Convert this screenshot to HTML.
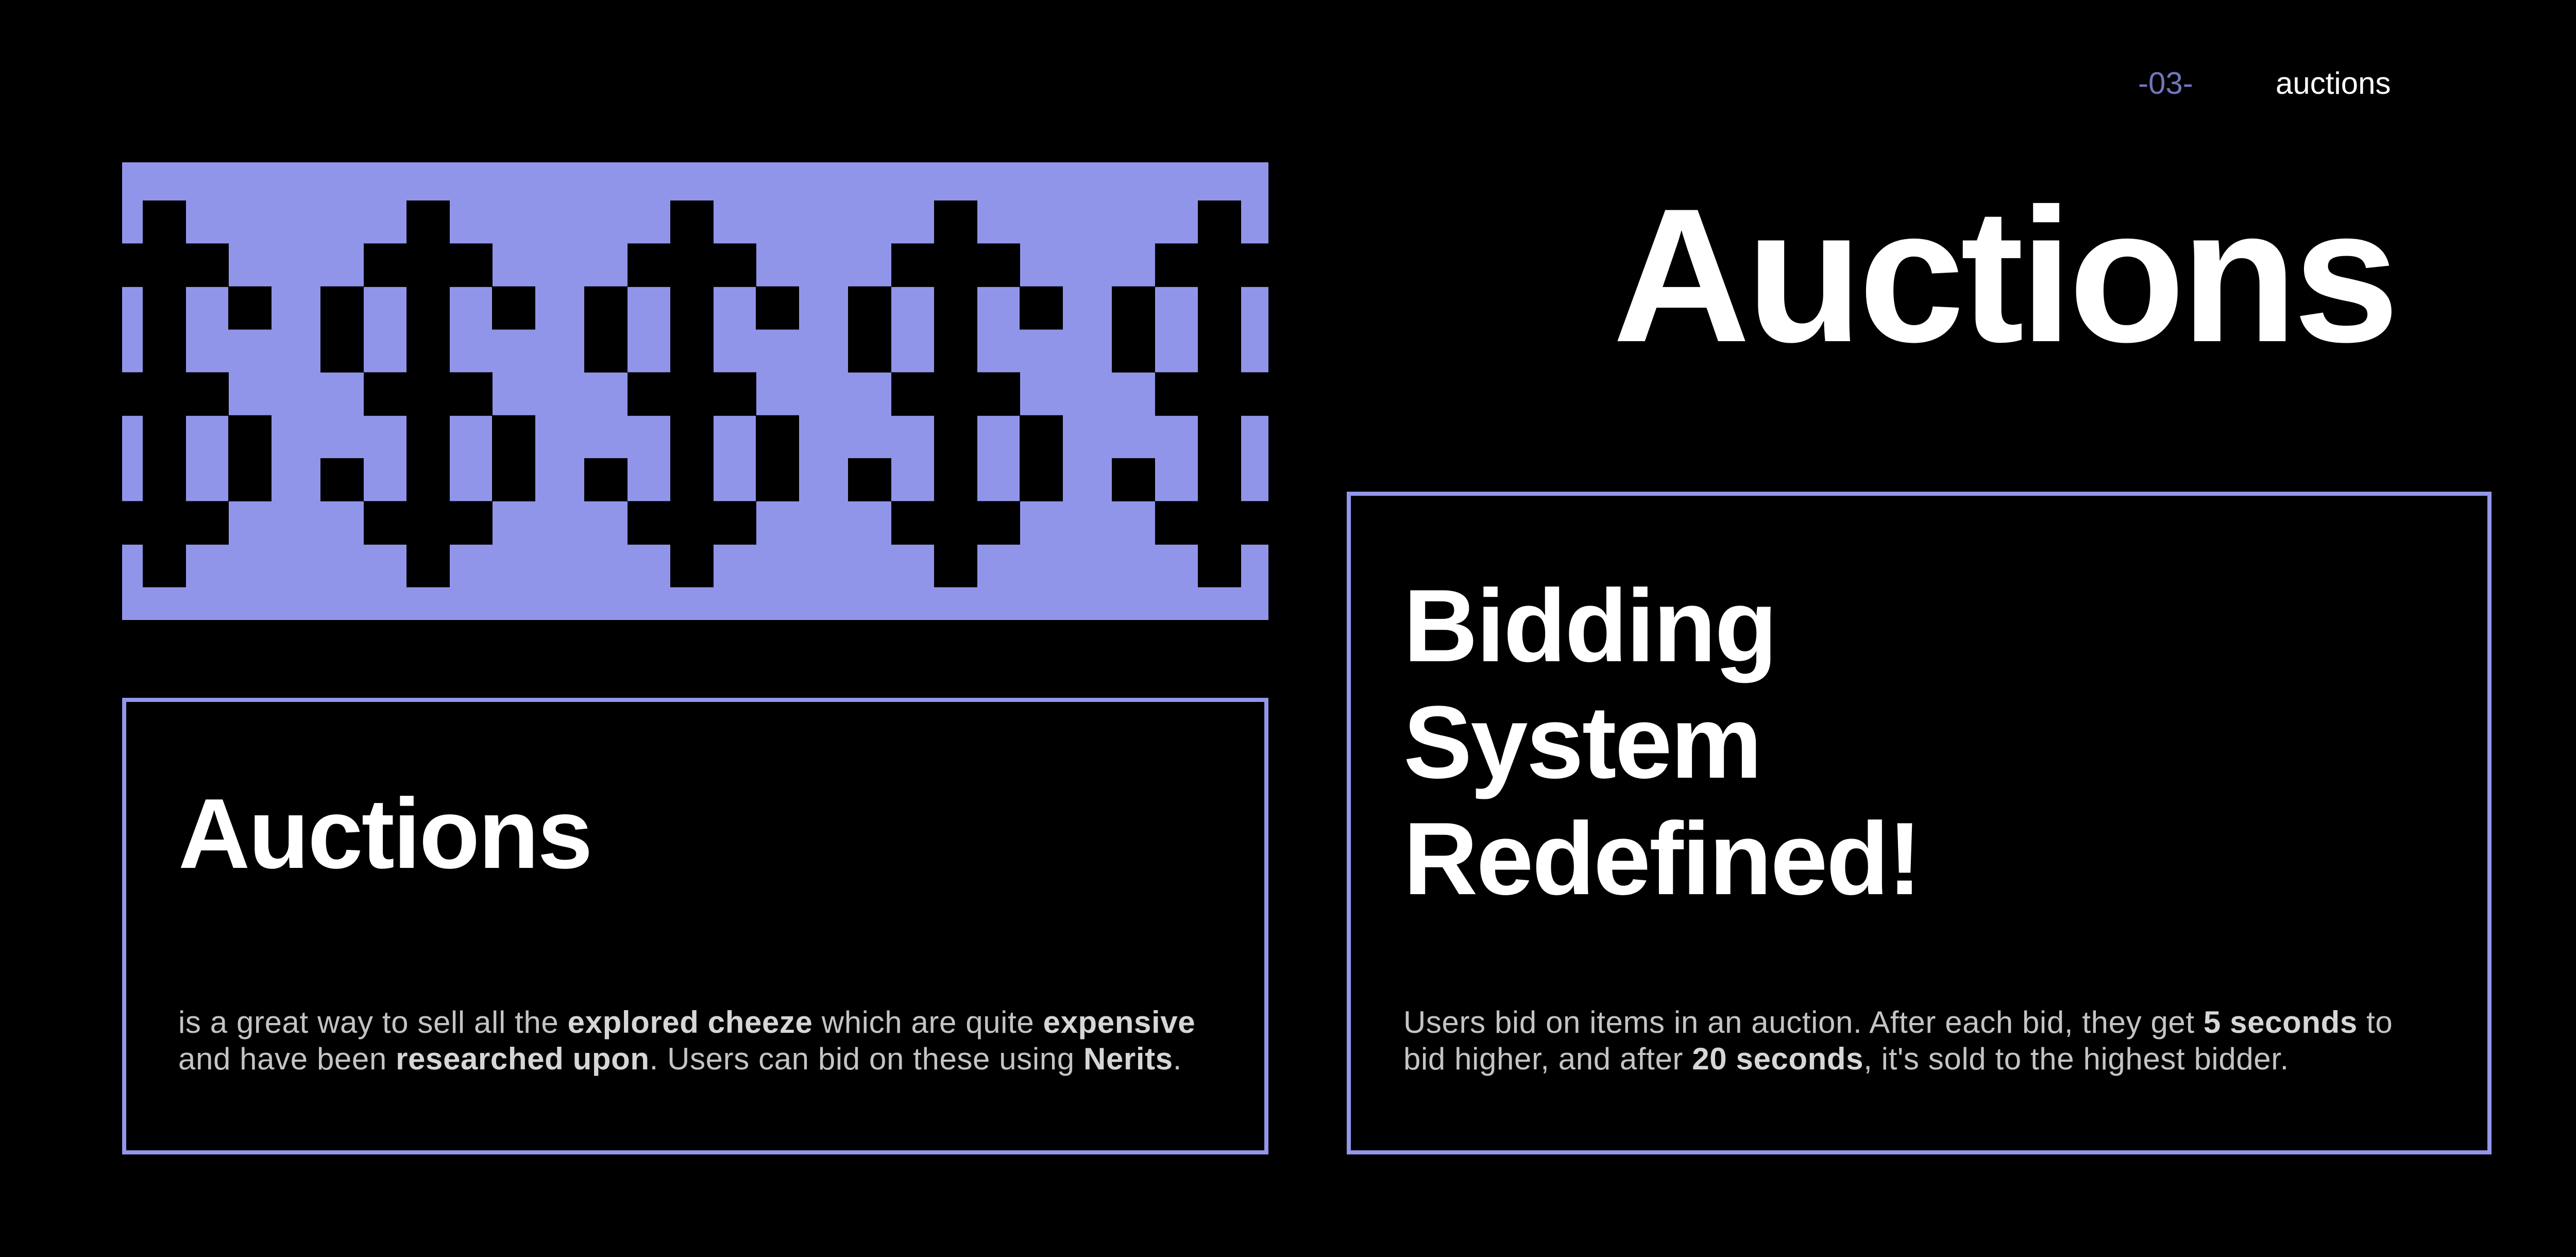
<!DOCTYPE html>
<html><head><meta charset="utf-8"><style>
html,body{margin:0;padding:0;background:#000;}
body{width:5073px;height:2439px;position:relative;overflow:hidden;font-family:"Liberation Sans",sans-serif;}
.a{position:absolute;white-space:nowrap;}
.card{position:absolute;border:8px solid #9396ea;box-sizing:border-box;}
.body{font-size:60px;line-height:71px;color:#c4c4c4;letter-spacing:0.6px;}
.body b{color:#d6d6d6;}
</style></head><body>
<div class="a" style="left:4150px;top:132px;font-size:60px;line-height:1;color:#7375bb;">-03-</div>
<div class="a" style="left:4417px;top:132px;font-size:60px;line-height:1;color:#fff;">auctions</div>
<div class="a" style="right:424px;top:350px;font-size:370px;line-height:1;color:#fff;font-weight:bold;letter-spacing:-8px;">Auctions</div>

<svg class="a" style="left:0;top:0" width="5073" height="1300" viewBox="0 0 5073 1300">
<defs><clipPath id="c"><rect x="237" y="315" width="2225" height="888"/></clipPath></defs>
<rect x="237" y="315" width="2225" height="888" fill="#9195ea"/>
<g clip-path="url(#c)" fill="#000" id="d">
</g>
</svg>
<script>
(function(){
var g=document.getElementById('d');var s='';
var R=function(r){return 389+83.33*r;};
for(var k=-1;k<6;k++){var S=277+512*k;
 var rects=[[0,0,1],[0,8,1],[-83,1,3],[-83,4,3],[-83,7,3],[0,1,8],[166,2,1],[-167,2,2],[166,5,2],[-167,6,1]];
 var w={0:84,'-83':250,'166':84,'-167':84};
 rects.forEach(function(q){var dx=q[0],r=q[1],n=q[2];var W=w[dx];var h=83.33*n;
  if(dx===0&&r===1)h=83.33*7;
  if(dx===-83) {n=1;h=84;}
  s+='<rect x="'+(S+dx)+'" y="'+R(r)+'" width="'+W+'" height="'+(h+0.5)+'"/>';});
}
g.innerHTML=s;})();
</script>

<div class="card" style="left:237px;top:1354px;width:2225px;height:886px;"></div>
<div class="a" style="left:346px;top:1521px;font-size:193px;line-height:1;color:#fff;font-weight:bold;letter-spacing:-3px;">Auctions</div>
<div class="a body" style="left:346px;top:1948px;">is a great way to sell all the <b>explored cheeze</b> which are quite <b>expensive</b><br>and have been <b>researched upon</b>. Users can bid on these using <b>Nerits</b>.</div>

<div class="card" style="left:2614px;top:954px;width:2222px;height:1286px;"></div>
<div class="a" style="left:2724px;top:1102px;font-size:200px;line-height:226px;color:#fff;font-weight:bold;letter-spacing:-3px;">Bidding<br>System<br>Redefined!</div>
<div class="a body" style="left:2724px;top:1948px;">Users bid on items in an auction. After each bid, they get <b>5 seconds</b> to<br>bid higher, and after <b>20 seconds</b>, it's sold to the highest bidder.</div>
</body></html>
